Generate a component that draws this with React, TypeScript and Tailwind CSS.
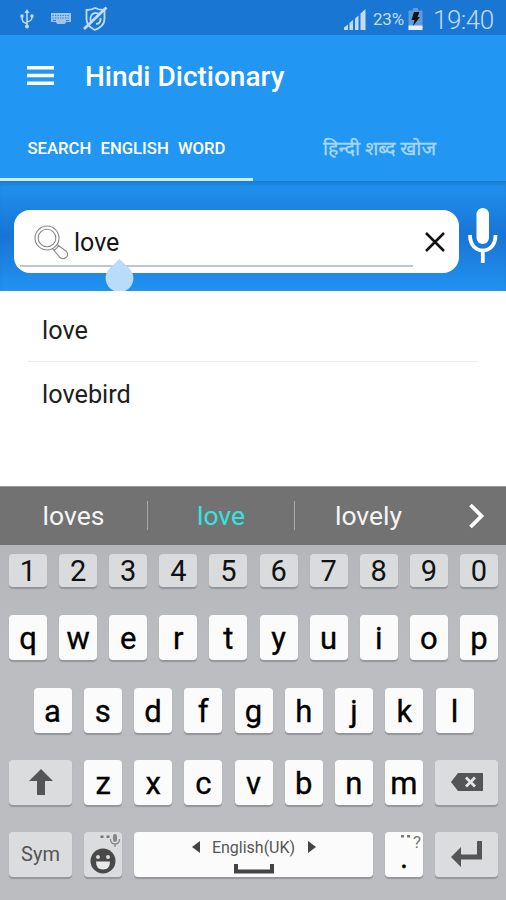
import React from 'react';
import { clsx } from 'clsx';

interface KeyProps {
  children: React.ReactNode;
  className?: string;
  variant?: 'letter' | 'digit' | 'special';
}

const digits = ['1', '2', '3', '4', '5', '6', '7', '8', '9', '0'];
const topRow = ['q', 'w', 'e', 'r', 't', 'y', 'u', 'i', 'o', 'p'];
const homeRow = ['a', 's', 'd', 'f', 'g', 'h', 'j', 'k', 'l'];
const bottomRow = ['z', 'x', 'c', 'v', 'b', 'n', 'm'];
const results = ['love', 'lovebird'];

const Key = ({ children, className = 'w-[38px]', variant = 'letter' }: KeyProps) => (
  <button
    type="button"
    className={clsx(
      'flex shrink-0 items-center justify-center rounded-[4px] shadow-[0_2px_1px_#94969b]',
      variant === 'digit' && 'h-[33px] bg-[#d9dbdd] pt-[2px] text-[29px] leading-[33px] text-[#111]',
      variant === 'letter' && 'h-[45px] bg-[#fbfbfb] pt-[3px] text-[31px] leading-[42px] text-black [-webkit-text-stroke:0.35px_black]',
      variant === 'special' && 'h-[45px] bg-[#dadcde] text-[#555]',
      className
    )}
  >
    {children}
  </button>
);

const StatusBar = () => (
  <div className="flex h-[35px] items-center bg-[#1976d2] pt-[3px] text-[#c3dcf6]">
    <svg className="ml-[19px] h-[22px] w-[16px]" viewBox="0 0 16 22" fill="none" stroke="currentColor" strokeWidth="1.5">
      <path d="M8 4v14M8 15.5C4 14.5 3 13.5 3 9M8 14c4-1 5-2 5-5" />
      <path d="M8 1l2.5 4h-5zM1.5 6.5h3v3h-3z" fill="currentColor" stroke="none" />
      <path d="M11.5 6.500h3v3h-3z" fill="currentColor" stroke="none" />
      <circle cx="8" cy="18.500" r="2" fill="currentColor" stroke="none" />
    </svg>
    <svg className="ml-[16px] h-[12px] w-[20px]" viewBox="0 0 20 12">
      <path d="M0 0h20v9h-5l-1 2H6L5 9H0z" fill="#9fc4ee" />
      <path d="M1.500 2.500h17M1.500 5h17" stroke="#2c80d6" strokeWidth="1" strokeDasharray="1.300 1.200" />
      <path d="M2 7.500h3M15 7.500h3" stroke="#2c80d6" strokeWidth="1" />
    </svg>
    <svg className="ml-[12px] h-[26px] w-[25px]" viewBox="0 0 25 26" fill="none" stroke="currentColor" strokeWidth="1.800">
      <path d="M3.500 4q5 0 8.500-2 4 2 9.500 2v9q0 7-9.500 11-8.500-4-8.500-11z" />
      <path d="M17 8.500q-5-3-8 0-3 4-.5 7.500M13 18q4-.5 4.500-4v-2" />
      <path d="M1 23L23.500 1.500" strokeWidth="2.800" />
    </svg>
    <svg className="ml-[235px] h-[23px] w-[24px]" viewBox="0 0 24 23" fill="#c3dcf6">
      <path d="M1 19.500l4-3V22H1zM6.500 15l3.500-3v10H6.500zM12 10.500l3.500-3V22H12zM17.500 5.500L22.500 1v21h-5z" />
    </svg>
    <span className="ml-[6px] w-[34px] text-[17px] leading-5 tracking-[-0.2px] whitespace-nowrap">23%</span>
    <svg className="ml-[1px] h-[23px] w-[15px]" viewBox="0 0 15 23">
      <path d="M5 0h5v2.500h4.500V22H.5V2.500H5z" fill="#5f9cd9" />
      <path d="M.5 17.500h14V22H.5z" fill="#e3effc" />
      <path d="M6 4h5.500L9.500 9H12L5 18l1.500-6H3.500z" fill="#101418" />
    </svg>
    <span className="ml-[10px] pt-px text-[26px] leading-8 font-light tracking-[-0.5px]">19:40</span>
  </div>
);

const Header = () => (
  <header className="h-[146px] bg-[#2196f3] text-white">
    <div className="flex h-[82px] items-center pl-[27px]">
      <svg className="h-[20px] w-[27px]" viewBox="0 0 27 20" fill="currentColor">
        <path d="M0 0h27v3.500H0zM0 7.800h27v3.400H0zM0 15.500h27V19H0z" />
      </svg>
      <h1 className="ml-[31px] pt-[2px] text-[28px] leading-8 font-medium whitespace-nowrap">Hindi Dictionary</h1>
    </div>
    <nav className="flex h-[64px]">
      <button type="button" className="flex w-[253px] justify-center border-b-3 border-[#cfe8fd] pt-[20px] text-[16.700px] leading-6 font-medium [word-spacing:5px] whitespace-nowrap">
        SEARCH ENGLISH WORD
      </button>
      <button type="button" className="flex flex-1 justify-center pt-[20px] text-[19.700px] leading-6 whitespace-nowrap text-[#a9d7fb] [-webkit-text-stroke:0.3px_#a9d7fb]">
        हिन्दी शब्द खोज
      </button>
    </nav>
  </header>
);

const SearchBar = () => (
  <section className="flex h-[110px] bg-linear-to-b from-[#2193f1] via-[#1974d4] to-[#2193f1] pt-[29px] pl-[14px] shadow-[inset_0_5px_4px_-2px_#1b7bcb]">
    <div className="relative flex h-[63px] w-[445px] rounded-[16px] bg-white">
      <svg className="mt-[15px] ml-[20px] h-[35px] w-[34px]" viewBox="0 0 34 35" fill="none" stroke="#898989" strokeWidth="1.100">
        <circle cx="13" cy="13" r="12" />
        <circle cx="13" cy="13" r="8.800" />
        <path d="M18.500 23.700l1.500 1.800 2.700-2.300 2-2.500-1.700-1.700M20 25.500l6 7q3 2.500 6 0t.5-6L24.700 20.700" />
      </svg>
      <span className="mt-[17px] ml-[6px] text-[25px] leading-8 text-[#161616]">love</span>
      <div className="absolute top-[55px] left-[6px] h-[2px] w-[393px] bg-[#bcc7d1]" />
      <svg className="absolute top-[49px] left-[91px] h-[32px] w-[29px]" viewBox="0 0 29 32">
        <path d="M14.500 0L24.500 9.500A14 14 0 0 1 20 32H9A14 14 0 0 1 4.500 9.500z" fill="#b9dcfa" />
      </svg>
      <svg className="mt-[22px] ml-auto mr-[14px] h-[20px] w-[20px]" viewBox="0 0 20 20" fill="none" stroke="#111" strokeWidth="2.500">
        <path d="M1 1l18 18M19 1L1 19" />
      </svg>
    </div>
    <svg className="mt-[-2px] ml-[9px] h-[56px] w-[30px]" viewBox="0 0 30 56" fill="none" stroke="#fff" strokeWidth="3.800">
      <rect x="8.500" y="0" width="12.500" height="36" rx="6.250" fill="#fff" stroke="none" />
      <path d="M2 27c0 9 5 15.500 12.800 15.500S27.500 36 27.500 27M14.800 42v13" />
    </svg>
  </section>
);

const Suggestions = () => (
  <div className="flex h-[59px] items-center border-t border-[#999] bg-[#727272] text-[26.500px] leading-8 text-[#f5f5f5]">
    <span className="w-[147px] text-center">loves</span>
    <span className="h-[29px] w-px bg-[#a9a9a9]" />
    <span className="w-[146px] text-center text-[#35e3df]">love</span>
    <span className="h-[29px] w-px bg-[#a9a9a9]" />
    <span className="w-[147px] text-center">lovely</span>
    <svg className="ml-[26px] h-[26px] w-[18px]" viewBox="0 0 18 26" fill="none" stroke="#fff" strokeWidth="3.800">
      <path d="M2.500 2l11 11-11 11" />
    </svg>
  </div>
);

const Keyboard = () => (
  <section className="h-[356px] bg-[#b9bbbf] bg-linear-to-b from-[#b4b6ba] to-[#bbbdc1] to-30% pt-[9px] pr-[8px] pl-[9px]">
    <div className="flex h-[61px] justify-between">
      {digits.map((key) => (
        <Key key={key} variant="digit">{key}</Key>
      ))}
    </div>
    <div className="flex h-[73px] justify-between">
      {topRow.map((key) => (
        <Key key={key}>{key}</Key>
      ))}
    </div>
    <div className="flex h-[72px] justify-between px-[24.500px]">
      {homeRow.map((key) => (
        <Key key={key}>{key}</Key>
      ))}
    </div>
    <div className="flex h-[72px] justify-between">
      <Key variant="special" className="w-[63px]">
        <svg className="h-[27px] w-[24px]" viewBox="0 0 24 27" fill="currentColor">
          <path d="M12 0l12 12h-8v14H8V12H0z" />
        </svg>
      </Key>
      {bottomRow.map((key) => (
        <Key key={key}>{key}</Key>
      ))}
      <Key variant="special" className="w-[63px]">
        <svg className="h-[18px] w-[32px]" viewBox="0 0 32 18">
          <path d="M0 9L7 0h25v18H7z" fill="#555" />
          <path d="M15 4.500l9 9M24 4.500l-9 9" stroke="#e4e5e6" strokeWidth="2.800" />
        </svg>
      </Key>
    </div>
    <div className="flex justify-between">
      <Key variant="special" className="w-[63px] text-[20px]">Sym</Key>
      <Key variant="special">
        <svg className="h-[45px] w-[38px]" viewBox="0 0 38 45">
          <path d="M16.500 3.500h3v2.500h-3zM22.500 3.500h3v2.500h-3z" fill="#777" />
          <rect x="29" y="2" width="4" height="8" rx="2" fill="#888" />
          <path d="M26.500 7q0 5 4.500 5t4.500-5M31 12v3" fill="none" stroke="#888" strokeWidth="1.300" />
          <circle cx="19" cy="29" r="12.500" fill="#494949" />
          <circle cx="14" cy="25" r="2" fill="#dadcde" />
          <circle cx="24" cy="25" r="2" fill="#dadcde" />
          <path d="M12 29.500h14q0 8-7 8t-7-8z" fill="#e8e9ea" />
        </svg>
      </Key>
      <Key className="w-[239px] flex-col">
        <span className="flex h-[20px] items-center text-[16px] leading-5 text-[#555] [-webkit-text-stroke:0px]">
          <svg className="h-[12px] w-[8px]" viewBox="0 0 8 12" fill="#444">
            <path d="M8 0v12L0 6z" />
          </svg>
          <span className="mx-[10px] w-[88px] pt-px text-center">English(UK)</span>
          <svg className="h-[12px] w-[8px]" viewBox="0 0 8 12" fill="#444">
            <path d="M0 0v12l8-6z" />
          </svg>
        </span>
        <svg className="mt-[7px] h-[10px] w-[40px]" viewBox="0 0 40 10">
          <path d="M2 0v7.500h36V0" fill="none" stroke="#444" strokeWidth="4" />
        </svg>
      </Key>
      <Key className="relative w-[38px]">
        <span className="pt-[5px]">.</span>
        <svg className="absolute top-[3px] left-[16px] h-[3px] w-[10px]" viewBox="0 0 10 3">
          <path d="M0 0h3v2.500H0zM6 0h3v2.500H6z" fill="#777" />
        </svg>
        <span className="absolute top-[1px] right-[2px] text-[17px] leading-[18px] text-[#777] [-webkit-text-stroke:0px]">?</span>
      </Key>
      <Key variant="special" className="w-[63px]">
        <svg className="h-[26px] w-[31px]" viewBox="0 0 31 26" fill="currentColor">
          <path d="M0 16L10 6v7.500h16V0h5v18.500H10V26z" />
        </svg>
      </Key>
    </div>
  </section>
);

const App = () => {
  return (
    <main className="flex h-[900px] w-[506px] flex-col overflow-hidden bg-white font-['Roboto','Noto_Sans',sans-serif]">
      <StatusBar />
      <Header />
      <SearchBar />
      <ul className="h-[195px] px-[28px] pt-[7px] text-[25.300px] leading-8 text-[#202020]">
        {results.map((word) => (
          <li key={word} className="flex h-[64px] items-center border-b border-[#ececec] pt-[3px] pl-[14px] last:border-b-0">
            {word}
          </li>
        ))}
      </ul>
      <Suggestions />
      <Keyboard />
    </main>
  );
};

export default App;
